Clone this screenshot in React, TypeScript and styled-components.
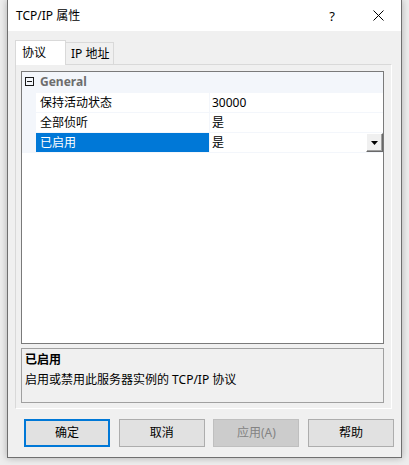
import React from "react";
import styled, { createGlobalStyle, css } from "styled-components";

const GlobalStyle = createGlobalStyle`
  html, body { margin: 0; padding: 0; }
  body {
    background: #ededed;
    font-family: "Noto Sans", "Noto Sans CJK SC", sans-serif;
    font-size: 12px;
    color: #000;
  }
  * { box-sizing: border-box; }
`;

const Page = styled.div`
  width: 409px;
  height: 465px;
  padding-left: 7px;
  overflow: hidden;
`;

const Window = styled.div`
  width: 395px;
  height: 458px;
  border: 1px solid #6f6f6f;
  border-top: none;
  display: flex;
  flex-direction: column;
  background: #f0f0f0;
  box-shadow: 0 0 7px rgba(0, 0, 0, 0.28);
`;

const TitleBar = styled.div`
  height: 31px;
  background: #fff;
  display: flex;
  align-items: center;
`;

const Title = styled.div`
  flex: 1;
  padding-left: 8px;
  line-height: 16px;
  font-size: 12px;
`;

const CaptionButton = styled.div`
  width: 46px;
  height: 31px;
  display: flex;
  align-items: center;
  justify-content: center;
  font-size: 13px;
`;

const Body = styled.div`
  flex: 1;
  display: flex;
  flex-direction: column;
  padding: 9px 9px 0 7px;
`;

const TabStrip = styled.div`
  display: flex;
  align-items: flex-end;
  height: 24px;
  position: relative;
  z-index: 1;
`;

const Tab = styled.div<{ $active?: boolean }>`
  display: flex;
  align-items: center;
  border: 1px solid #d9d9d9;
  border-bottom: none;
  line-height: 16px;
  ${(p) =>
    p.$active
      ? css`
          height: 25px;
          margin-bottom: -1px;
          background: #fff;
          padding: 0 7px 0 6px;
          width: 51px;
        `
      : css`
          height: 22px;
          border-left: none;
          background: #f0f0f0;
          padding: 1px 0 0 5px;
          width: 48px;
        `}
`;

const Panel = styled.div`
  width: 377px;
  height: 345px;
  border: 1px solid #d9d9d9;
  border-right-color: #fff;
  border-bottom-color: #fff;
  background: #f0f0f0;
  padding: 6px 7px 5px 5px;
  display: flex;
  flex-direction: column;
  gap: 4px;
`;

const Grid = styled.div`
  height: 273px;
  border: 1px solid #7a7a7a;
  background: #fff;
  display: flex;
  flex-direction: column;
`;

const CategoryRow = styled.div`
  height: 21px;
  background: #f3f6fb;
  border-bottom: 1px solid #f3f6fb;
  display: flex;
  align-items: center;
  padding-left: 2px;
`;

const ExpandBox = styled.div`
  width: 9px;
  height: 9px;
  border: 1px solid #1a1a1a;
  position: relative;
  margin-right: 6px;
  margin-left: 1px;
  margin-top: -2px;
  &::after {
    content: "";
    position: absolute;
    left: 1px;
    right: 1px;
    top: 3px;
    height: 1px;
    background: #1a1a1a;
  }
`;

const CategoryLabel = styled.div`
  font-weight: bold;
  color: #6d6d6d;
  line-height: 16px;
`;

const Row = styled.div`
  height: 20px;
  display: flex;
  border-bottom: 1px solid #f3f6fb;
`;

const Margin = styled.div`
  width: 14px;
  background: #f3f6fb;
`;

const LabelCell = styled.div<{ $selected?: boolean }>`
  width: 174px;
  border-right: 1px solid #f3f6fb;
  padding-left: 4px;
  display: flex;
  align-items: center;
  line-height: 16px;
  background: ${(p) => (p.$selected ? "#0078d7" : "#fff")};
  color: ${(p) => (p.$selected ? "#fff" : "#000")};
`;

const ValueCell = styled.div`
  flex: 1;
  display: flex;
  align-items: center;
  padding-left: 2px;
  line-height: 16px;
`;

const ValueText = styled.div`
  flex: 1;
`;

const DropButton = styled.div`
  width: 17px;
  height: 19px;
  background: #f0f0f0;
  border-top: 1px solid #fff;
  border-left: 1px solid #fff;
  border-right: 1px solid #696969;
  border-bottom: 1px solid #696969;
  box-shadow: inset -1px -1px 0 #a0a0a0;
  display: flex;
  align-items: center;
  justify-content: center;
  align-self: flex-start;
`;

const Description = styled.div`
  height: 55px;
  border: 1px solid #a0a0a0;
  padding: 3px 3px 0 3px;
  display: flex;
  flex-direction: column;
  gap: 4px;
`;

const DescTitle = styled.div`
  font-weight: bold;
  line-height: 16px;
`;

const DescText = styled.div`
  line-height: 16px;
`;

const ButtonRow = styled.div`
  display: flex;
  justify-content: space-between;
  padding: 10px 0 0 9px;
  margin-right: -2px;
`;

const Button = styled.div<{ $variant?: "default" | "disabled" }>`
  width: 86px;
  height: 28px;
  display: flex;
  align-items: center;
  justify-content: center;
  background: #e1e1e1;
  border: 1px solid #adadad;
  line-height: 16px;
  ${(p) =>
    p.$variant === "default" &&
    css`
      border: 2px solid #0078d7;
    `}
  ${(p) =>
    p.$variant === "disabled" &&
    css`
      background: #cccccc;
      border-color: #bfbfbf;
      color: #838383;
    `}
`;

const rows = [
  { label: "保持活动状态", value: "30000" },
  { label: "全部侦听", value: "是" },
  { label: "已启用", value: "是", selected: true },
];

export default function App() {
  return (
    <Page>
      <GlobalStyle />
      <Window>
        <TitleBar>
          <Title>TCP/IP 属性</Title>
          <CaptionButton>?</CaptionButton>
          <CaptionButton>
            <svg width="11" height="11" viewBox="0 0 11 11">
              <path d="M0.5 0.5 L10.5 10.5 M10.5 0.5 L0.5 10.5" stroke="#000" strokeWidth="1" fill="none" />
            </svg>
          </CaptionButton>
        </TitleBar>
        <Body>
          <TabStrip>
            <Tab $active>协议</Tab>
            <Tab>IP 地址</Tab>
          </TabStrip>
          <Panel>
            <Grid>
              <CategoryRow>
                <ExpandBox />
                <CategoryLabel>General</CategoryLabel>
              </CategoryRow>
              {rows.map((r) => (
                <Row key={r.label}>
                  <Margin />
                  <LabelCell $selected={r.selected}>{r.label}</LabelCell>
                  <ValueCell>
                    <ValueText>{r.value}</ValueText>
                    {r.selected && (
                      <DropButton>
                        <svg width="7" height="4" viewBox="0 0 7 4">
                          <path d="M0 0 H7 L3.5 4 Z" fill="#000" />
                        </svg>
                      </DropButton>
                    )}
                  </ValueCell>
                </Row>
              ))}
            </Grid>
            <Description>
              <DescTitle>已启用</DescTitle>
              <DescText>启用或禁用此服务器实例的 TCP/IP 协议</DescText>
            </Description>
          </Panel>
          <ButtonRow>
            <Button $variant="default">确定</Button>
            <Button>取消</Button>
            <Button $variant="disabled">应用(A)</Button>
            <Button>帮助</Button>
          </ButtonRow>
        </Body>
      </Window>
    </Page>
  );
}
